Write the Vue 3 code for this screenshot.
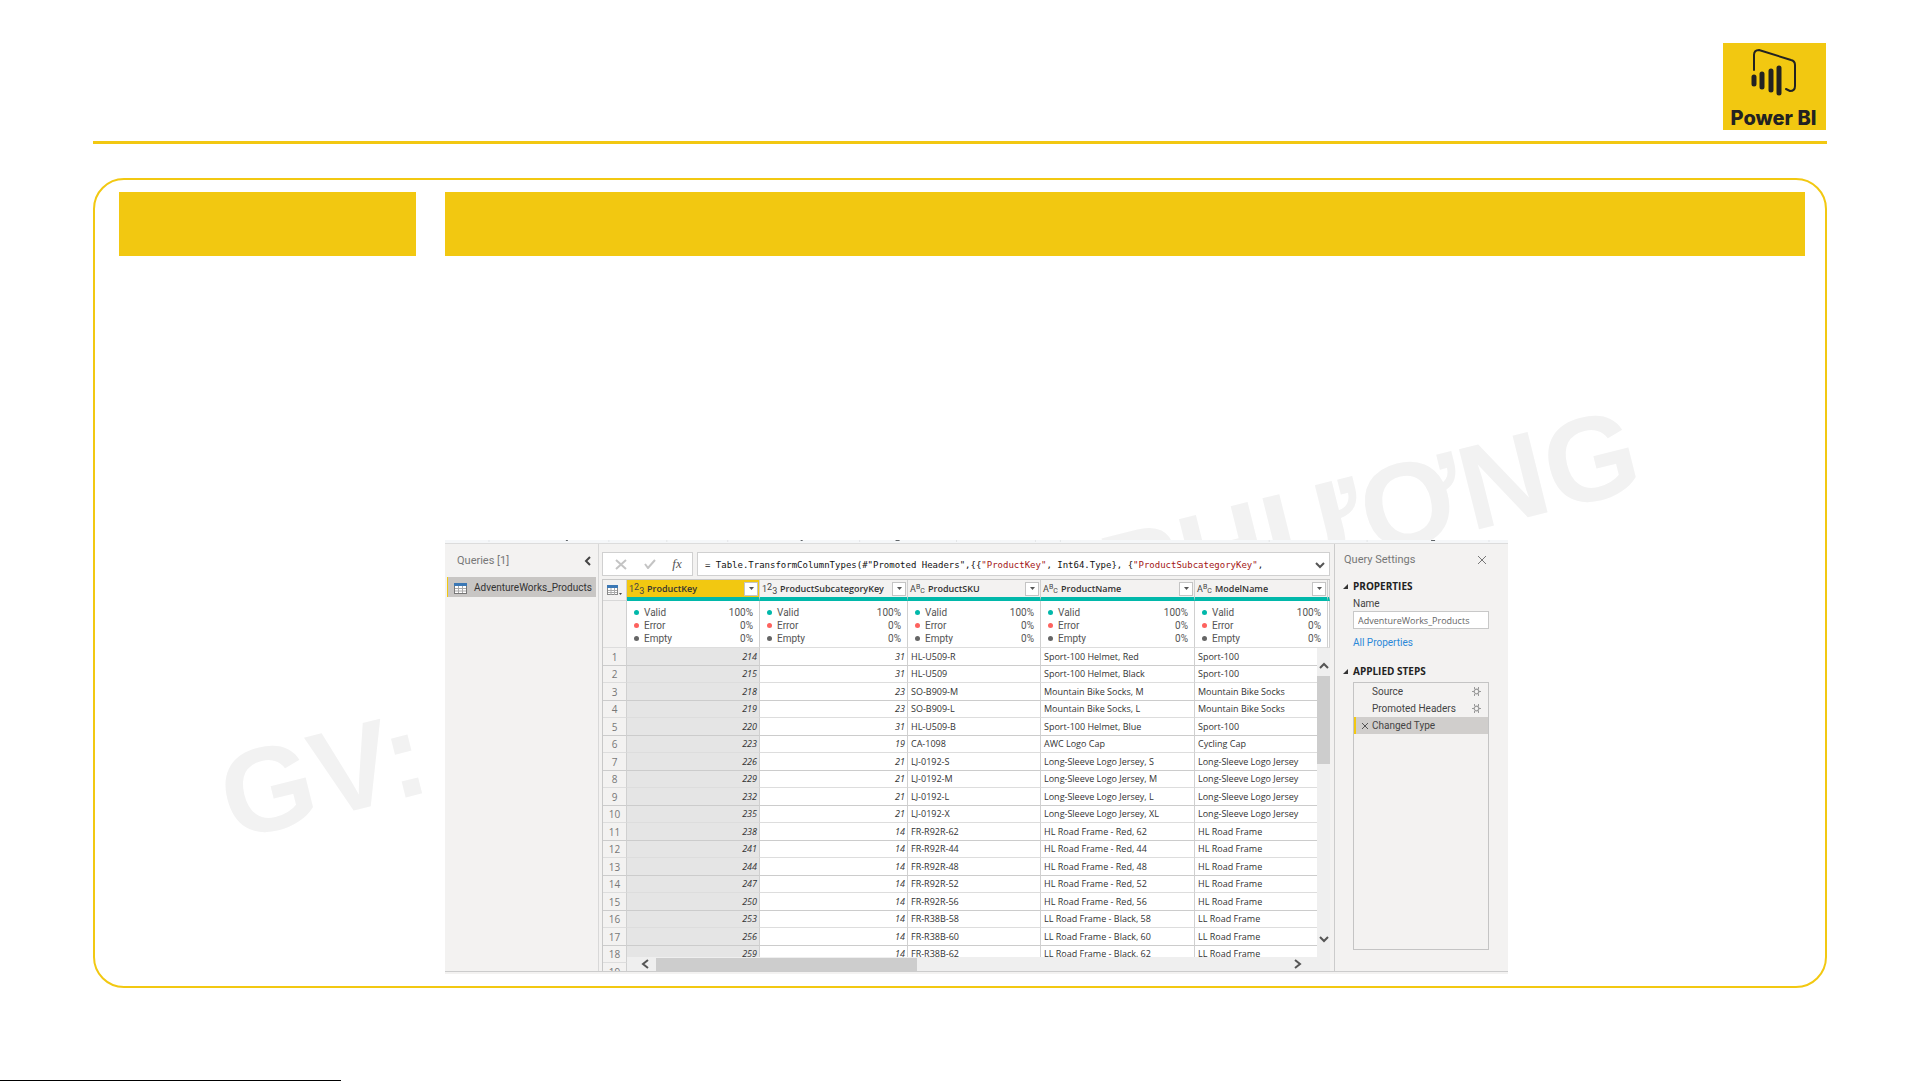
<script setup>
const columns = [
  { key: 'key', name: 'ProductKey', type: 'num' },
  { key: 'sub', name: 'ProductSubcategoryKey', type: 'num' },
  { key: 'sku', name: 'ProductSKU', type: 'text' },
  { key: 'name', name: 'ProductName', type: 'text' },
  { key: 'model', name: 'ModelName', type: 'text' },
]

const formula = [
  { text: '= Table.TransformColumnTypes(#"Promoted Headers",{{' },
  { text: '"ProductKey"', literal: true },
  { text: ', Int64.Type}, {' },
  { text: '"ProductSubcategoryKey"', literal: true },
  { text: ',' },
]

const quality = [
  { label: 'Valid', value: '100%' },
  { label: 'Error', value: '0%' },
  { label: 'Empty', value: '0%' },
]

const rows = [
  [214, 31, 'HL-U509-R', 'Sport-100 Helmet, Red', 'Sport-100'],
  [215, 31, 'HL-U509', 'Sport-100 Helmet, Black', 'Sport-100'],
  [218, 23, 'SO-B909-M', 'Mountain Bike Socks, M', 'Mountain Bike Socks'],
  [219, 23, 'SO-B909-L', 'Mountain Bike Socks, L', 'Mountain Bike Socks'],
  [220, 31, 'HL-U509-B', 'Sport-100 Helmet, Blue', 'Sport-100'],
  [223, 19, 'CA-1098', 'AWC Logo Cap', 'Cycling Cap'],
  [226, 21, 'LJ-0192-S', 'Long-Sleeve Logo Jersey, S', 'Long-Sleeve Logo Jersey'],
  [229, 21, 'LJ-0192-M', 'Long-Sleeve Logo Jersey, M', 'Long-Sleeve Logo Jersey'],
  [232, 21, 'LJ-0192-L', 'Long-Sleeve Logo Jersey, L', 'Long-Sleeve Logo Jersey'],
  [235, 21, 'LJ-0192-X', 'Long-Sleeve Logo Jersey, XL', 'Long-Sleeve Logo Jersey'],
  [238, 14, 'FR-R92R-62', 'HL Road Frame - Red, 62', 'HL Road Frame'],
  [241, 14, 'FR-R92R-44', 'HL Road Frame - Red, 44', 'HL Road Frame'],
  [244, 14, 'FR-R92R-48', 'HL Road Frame - Red, 48', 'HL Road Frame'],
  [247, 14, 'FR-R92R-52', 'HL Road Frame - Red, 52', 'HL Road Frame'],
  [250, 14, 'FR-R92R-56', 'HL Road Frame - Red, 56', 'HL Road Frame'],
  [253, 14, 'FR-R38B-58', 'LL Road Frame - Black, 58', 'LL Road Frame'],
  [256, 14, 'FR-R38B-60', 'LL Road Frame - Black, 60', 'LL Road Frame'],
  [259, 14, 'FR-R38B-62', 'LL Road Frame - Black, 62', 'LL Road Frame'],
  ['', '', '', '', ''],
]

const steps = [
  { name: 'Source', gear: true },
  { name: 'Promoted Headers', gear: true },
  { name: 'Changed Type', gear: false, active: true },
]
</script>

<template>
  <div class="page">
    <header class="top">
      <div class="logo">
        <svg class="logo-mark" viewBox="0 0 48 50" aria-hidden="true">
          <g fill="none" stroke="#222" stroke-linecap="round" stroke-linejoin="round">
            <path stroke-width="2" d="M4 22V7Q4 2 9 2L41 12Q45 13 45 17V38Q45 43 40 43L36 41" />
            <path stroke-width="5" d="M4 29v7M12 26v13M21 23v19M29 20v25" />
          </g>
        </svg>
        <span class="logo-name">Power BI</span>
      </div>
    </header>

    <main class="frame">
      <span class="mark mark-a" aria-hidden="true">GV:</span>
      <span class="mark mark-b" aria-hidden="true">PHƯƠNG</span>
      <div class="bar"></div>
      <div class="bar"></div>

      <section class="window">
        <svg class="ribbon" viewBox="0 0 1064 4" preserveAspectRatio="none" aria-hidden="true">
          <rect width="1064" height="4" fill="#f5f7f9" />
          <path d="M44 0v2M164 0v2M222 0v2M283 0v2M415 0v2M512 0v2M591 0v2M616 0v2M825 0v2M923 0v2M1045 0v2" stroke="#e4e6e8" />
          <path d="M121 .5h2M356 .5h2M451 .5h4M987 .5h4" stroke="#5f6468" />
          <path d="M0 3.500h1064" stroke="#dcdcdc" />
        </svg>

        <div class="panes">
          <aside class="queries">
            <div class="pane-title">
              <h2>Queries [1]</h2>
              <button type="button" aria-label="Collapse">
                <svg width="7" height="10" viewBox="0 0 7 10"><path d="M6 1L2 5l4 4" fill="none" stroke="#444" stroke-width="2" /></svg>
              </button>
            </div>
            <button type="button" class="query">
              <svg width="13" height="11" viewBox="0 0 13 11" aria-hidden="true">
                <rect x=".5" y=".5" width="12" height="10" fill="#fff" stroke="#777" />
                <path d="M0 1.500h13" stroke="#3b78b5" stroke-width="3" />
                <path d="M1 5.500h11M1 8h11M4.500 3v7M8.500 3v7" stroke="#aaa" />
              </svg>
              AdventureWorks_Products
            </button>
          </aside>

          <div class="editor">
            <div class="formula-row">
              <div class="formula-tools">
                <button type="button" aria-label="Cancel">
                  <svg width="12" height="11" viewBox="0 0 12 11"><path d="M1 1l10 9M11 1L1 10" stroke="#c4c4c4" stroke-width="2" /></svg>
                </button>
                <button type="button" aria-label="Commit">
                  <svg width="12" height="10" viewBox="0 0 12 10"><path d="M1 5l3 4 7-8" fill="none" stroke="#c4c4c4" stroke-width="2" /></svg>
                </button>
                <button type="button" class="fx" aria-label="Insert step">fx</button>
              </div>
              <div class="formula">
                <code><span v-for="(part, i) in formula" :key="i" :class="{ literal: part.literal }">{{ part.text }}</span></code>
                <button type="button" aria-label="Expand formula">
                  <svg width="10" height="7" viewBox="0 0 10 7"><path d="M1 1l4 4 4-4" fill="none" stroke="#555" stroke-width="2" /></svg>
                </button>
              </div>
            </div>

            <div class="grid">
              <table>
                <colgroup>
                  <col class="c-index" /><col class="c-key" /><col class="c-sub" /><col class="c-sku" /><col class="c-name" /><col class="c-model" /><col />
                </colgroup>
                <thead>
                  <tr class="names">
                    <th class="corner">
                      <svg width="15" height="11" viewBox="0 0 15 11" aria-hidden="true">
                        <rect x=".5" y=".5" width="10" height="9" fill="#fff" stroke="#888" />
                        <path d="M0 1.500h11" stroke="#3b78b5" stroke-width="3" />
                        <path d="M1 5.500h9M1 7.500h9M4 3v7M7.500 3v7" stroke="#aaa" />
                        <path d="M12 8h3l-1.500 2z" fill="#444" />
                      </svg>
                    </th>
                    <th v-for="c in columns" :key="c.key" scope="col" :class="{ picked: c.key === 'key' }">
                      <div class="head">
                        <span v-if="c.type === 'num'" class="type">1<sup>2</sup><sub>3</sub></span>
                        <span v-else class="type abc">A<sup>B</sup><sub>C</sub></span>
                        <span class="title">{{ c.name }}</span>
                        <button type="button" :aria-label="'Filter ' + c.name">
                          <svg width="5" height="3" viewBox="0 0 5 3"><path d="M0 0h5L2.500 3z" fill="#555" /></svg>
                        </button>
                      </div>
                    </th>
                    <th></th>
                  </tr>
                  <tr class="quality">
                    <td></td>
                    <td v-for="c in columns" :key="c.key">
                      <ul>
                        <li v-for="q in quality" :key="q.label" :class="q.label.toLowerCase()">
                          <span>{{ q.label }}</span><span>{{ q.value }}</span>
                        </li>
                      </ul>
                    </td>
                    <td></td>
                  </tr>
                </thead>
                <tbody>
                  <tr v-for="(row, i) in rows" :key="i">
                    <th scope="row">{{ i + 1 }}</th>
                    <td v-for="(cell, j) in row" :key="j" :class="{ num: j < 2, picked: j === 0 }">{{ cell }}</td>
                    <td></td>
                  </tr>
                </tbody>
              </table>

              <div class="vscroll">
                <svg width="10" height="7" viewBox="0 0 10 7"><path d="M1 6l4-4 4 4" fill="none" stroke="#555" stroke-width="2" /></svg>
                <div class="thumb"></div>
                <svg width="10" height="7" viewBox="0 0 10 7"><path d="M1 1l4 4 4-4" fill="none" stroke="#555" stroke-width="2" /></svg>
              </div>
              <div class="hscroll">
                <svg width="8" height="10" viewBox="0 0 8 10"><path d="M7 1L2 5l5 4" fill="none" stroke="#555" stroke-width="2" /></svg>
                <div class="thumb"></div>
                <svg width="8" height="10" viewBox="0 0 8 10"><path d="M1 1l5 4-5 4" fill="none" stroke="#555" stroke-width="2" /></svg>
              </div>
            </div>
          </div>

          <aside class="settings">
            <div class="pane-title">
              <h2>Query Settings</h2>
              <button type="button" aria-label="Close">
                <svg width="10" height="10" viewBox="0 0 10 10"><path d="M1 1l8 8M9 1L1 9" stroke="#777" /></svg>
              </button>
            </div>
            <h3>
              <svg width="5" height="5" viewBox="0 0 5 5" aria-hidden="true"><path d="M5 0v5H0z" fill="#333" /></svg>
              PROPERTIES
            </h3>
            <div class="group">
              <label for="query-name">Name</label>
              <input id="query-name" type="text" value="AdventureWorks_Products" />
              <a href="#">All Properties</a>
            </div>
            <h3 class="steps-title">
              <svg width="5" height="5" viewBox="0 0 5 5" aria-hidden="true"><path d="M5 0v5H0z" fill="#333" /></svg>
              APPLIED STEPS
            </h3>
            <ul class="steps">
              <li v-for="s in steps" :key="s.name" :class="{ active: s.active }">
                <svg v-if="s.active" width="8" height="8" viewBox="0 0 8 8" aria-hidden="true"><path d="M1 1l6 6M7 1L1 7" stroke="#555" /></svg>
                <span>{{ s.name }}</span>
                <svg v-if="s.gear" width="9" height="9" viewBox="0 0 9 9" aria-hidden="true">
                  <circle cx="4.500" cy="4.500" r="2.300" fill="none" stroke="#999" stroke-width="1.200" />
                  <path d="M2.500 0v2M6.500 0v2M2.500 7v2M6.500 7v2M0 4.500h2M7 4.500h2" stroke="#999" />
                </svg>
              </li>
            </ul>
          </aside>
        </div>
      </section>
    </main>

    <footer class="foot"></footer>
  </div>
</template>

<style>
body {
  margin: 0;
  background: #fff;
}
</style>

<style scoped>
* {
  box-sizing: border-box;
}
.page {
  min-height: 100vh;
  display: flex;
  flex-direction: column;
  overflow: hidden;
  font-family: "Open Sans", "Noto Sans", sans-serif;
}
button {
  border: 0;
  padding: 0;
  margin: 0;
  background: none;
  display: flex;
  align-items: center;
  justify-content: center;
  font: inherit;
  color: inherit;
}
h2, h3, ul {
  margin: 0;
  padding: 0;
  list-style: none;
}
svg {
  display: block;
  flex: none;
}
.top {
  margin: 43px 94px 0 93px;
  padding: 0 1px 11px 0;
  border-bottom: 3px solid #f2c811;
  display: flex;
  justify-content: flex-end;
}
.logo {
  width: 103px;
  height: 87px;
  padding: 5px 2px 0 0;
  background: #f2c811;
  display: flex;
  flex-direction: column;
  align-items: center;
}
.logo-mark {
  width: 48px;
  height: 50px;
}
.logo-name {
  font: 800 20px/24px Inter, sans-serif;
  margin-top: 8px;
  color: #222;
  white-space: nowrap;
}
.frame {
  position: relative;
  margin: 34px 94px 0 93px;
  padding: 12px 20px 12px 24px;
  border: 2px solid #f2c811;
  border-radius: 31px;
  display: grid;
  grid-template-columns: 297px minmax(0, 1fr);
  column-gap: 29px;
}
.bar {
  height: 64px;
  background: #f2c811;
}
.mark {
  position: absolute;
  font: bold 120px/120px "Liberation Sans", Arial, sans-serif;
  color: #f2f2f2;
  transform: rotate(-14deg);
  transform-origin: left bottom;
  white-space: nowrap;
}
.mark-a {
  left: 142px;
  top: 558px;
}
.mark-b {
  left: 1023px;
  top: 338px;
}
.window {
  position: relative;
  grid-column: 2;
  margin-top: 284px;
  width: 100%;
  max-width: 1063px;
  height: 434px;
  background: #f3f2f1;
  display: flex;
  flex-direction: column;
}
.ribbon {
  width: 100%;
  height: 4px;
}
.panes {
  flex: 1;
  min-height: 0;
  display: flex;
  border-bottom: 1px solid #ccc;
  margin-bottom: 2px;
}
.pane-title {
  display: flex;
  align-items: center;
  justify-content: space-between;
  height: 33px;
}
.pane-title h2 {
  font: 400 11px/16px Roboto, sans-serif;
  color: #777;
}
.queries {
  flex: none;
  width: 154px;
  padding: 0 2px;
  border-right: 1px solid #d8d8d8;
}
.queries .pane-title {
  padding: 0 5px 0 10px;
}
.query {
  width: 149px;
  height: 20px;
  padding: 2px 0 0 6px;
  border-left: 1px solid #f2c811;
  background: #c8c6c4;
  justify-content: flex-start;
  gap: 7px;
  font: 10px/16px Roboto, sans-serif;
  color: #333;
}
.editor {
  flex: 1;
  min-width: 0;
  padding: 8px 4px 0 3px;
  display: flex;
  flex-direction: column;
}
.formula-row {
  display: flex;
  gap: 4px;
  height: 24px;
}
.formula-tools {
  width: 91px;
  border: 1px solid #d0d0d0;
  background: #fff;
  display: flex;
  align-items: center;
  justify-content: space-around;
  padding: 0 2px 0 4px;
}
.fx {
  font: italic 13px/16px "Liberation Serif", serif;
  color: #555;
}
.formula {
  flex: 1;
  min-width: 0;
  border: 1px solid #d0d0d0;
  background: #fff;
  display: flex;
  align-items: center;
  justify-content: space-between;
  padding: 2px 4px 0 7px;
}
.formula code {
  font: 9px/16px "DejaVu Sans Mono", monospace;
  white-space: pre;
  color: #111;
}
.formula .literal {
  color: #a31515;
}
.grid {
  position: relative;
  flex: 1;
  min-height: 0;
  margin-top: 3px;
  border-left: 1px solid #c8c8c8;
  border-top: 1px solid #c8c8c8;
  overflow: hidden;
}
table {
  width: 100%;
  table-layout: fixed;
  border-collapse: separate;
  border-spacing: 0;
  background: #fff;
}
.c-index { width: 24px; }
.c-key { width: 133px; }
.c-sub { width: 148px; }
.c-sku { width: 133px; }
.c-name { width: 154px; }
.c-model { width: 133px; }
th, td {
  padding: 0;
  border-right: 1px solid #d0d0d0;
  overflow: hidden;
}
.names th {
  height: 21px;
  background: #f3f2f1;
  border-bottom: 4px solid #01b8aa;
}
.names .corner {
  border-bottom: 1px solid #d8d8d8;
}
.corner svg {
  margin-left: 4px;
}
.names .picked {
  background: #f2c811;
}
.head {
  display: flex;
  align-items: center;
  padding: 0 1px 0 2px;
  height: 17px;
}
.head button {
  width: 14px;
  height: 14px;
  border: 1px solid #c4c4c4;
  background: #fff;
}
.type {
  width: 18px;
  font: 9px/12px Roboto, sans-serif;
  color: #444;
  display: flex;
  flex: none;
}
.type sup, .type sub {
  font-size: 9px;
  line-height: 12px;
  vertical-align: baseline;
  position: relative;
}
.type sup { top: -2px; }
.type sub { top: 2px; }
.abc sup, .abc sub { font-size: 7px; }
.title {
  flex: 1;
  font-size: 9px;
  line-height: 12px;
  font-weight: 600;
  color: #333;
  text-align: left;
}
.quality td {
  height: 47px;
  border-bottom: 1px solid #ddd;
}
.quality td:first-child {
  background: #f3f2f1;
}
.quality ul {
  padding: 2px 6px 0 7px;
  font: 10px/13px Roboto, sans-serif;
  color: #555;
}
.quality li {
  display: flex;
  align-items: center;
  height: 13px;
}
.quality li::before {
  content: "";
  width: 5px;
  height: 5px;
  margin-right: 5px;
  border-radius: 50%;
  background: #666;
}
.quality .valid::before { background: #01b8aa; }
.quality .error::before { background: #fd625e; }
.quality li span:last-child {
  margin-left: auto;
}
tbody tr {
  height: 18px;
}
tbody tr:nth-child(even) {
  height: 17px;
}
tbody th, tbody td {
  border-bottom: 1px solid #ccc;
  font-size: 9px;
  line-height: 14px;
  color: #333;
  white-space: nowrap;
}
tbody tr:nth-child(even) > * {
  border-bottom-color: #ddd;
}
tbody td {
  padding-left: 3px;
}
tbody th {
  font: 10px/14px "Open Sans", sans-serif;
  color: #777;
  background: #f3f2f1;
  text-align: center;
}
tbody .num {
  text-align: right;
  font-style: italic;
  padding-right: 2px;
}
tbody .picked {
  background: #e5e5e5;
}
.vscroll {
  position: absolute;
  right: 0;
  top: 68px;
  bottom: 14px;
  width: 13px;
  padding: 14px 0;
  background: #efefef;
  display: flex;
  flex-direction: column;
  align-items: center;
}
.vscroll .thumb {
  width: 13px;
  height: 88px;
  margin: 7px 0 auto;
  background: #cdcdcd;
}
.hscroll {
  position: absolute;
  left: 24px;
  right: 0;
  bottom: 0;
  height: 14px;
  padding: 0 28px 0 14px;
  background: #efefef;
  display: flex;
  align-items: center;
}
.hscroll .thumb {
  width: 261px;
  height: 13px;
  margin: 0 auto 0 7px;
  background: #cdcdcd;
}
.settings {
  flex: none;
  width: 174px;
  padding: 0 19px 0 4px;
  border-left: 1px solid #ccc;
  color: #444;
  font: 10px/16px Roboto, sans-serif;
  display: flex;
  flex-direction: column;
}
.settings .pane-title {
  height: 32px;
  padding: 0 2px 0 5px;
}
h3 {
  display: flex;
  align-items: center;
  gap: 5px;
  height: 20px;
  padding-left: 4px;
  font: 700 10px/14px "Open Sans", sans-serif;
  color: #222;
}
.group {
  display: flex;
  flex-direction: column;
  align-items: flex-start;
  padding-left: 14px;
}
.group label {
  line-height: 15px;
}
.group input {
  width: 100%;
  height: 18px;
  margin: 0 0 6px;
  padding: 0 4px;
  border: 1px solid #c8c8c8;
  background: #fff;
  font: 9px/14px "Open Sans", sans-serif;
  color: #666;
}
.group a {
  line-height: 16px;
  color: #2b88d8;
  text-decoration: none;
}
.steps-title {
  margin-top: 10px;
}
.steps {
  flex: 1;
  margin: 1px 0 21px 14px;
  border: 1px solid #c4c4c4;
}
.steps li {
  display: flex;
  align-items: center;
  height: 17px;
  padding: 0 7px 0 18px;
}
.steps span {
  flex: 1;
}
.steps .active {
  background: #d0cecc;
  border-left: 2px solid #f2c811;
  padding-left: 5px;
  gap: 3px;
}
.foot {
  margin-top: auto;
  width: 341px;
  height: 1px;
  background: #000;
}
</style>
